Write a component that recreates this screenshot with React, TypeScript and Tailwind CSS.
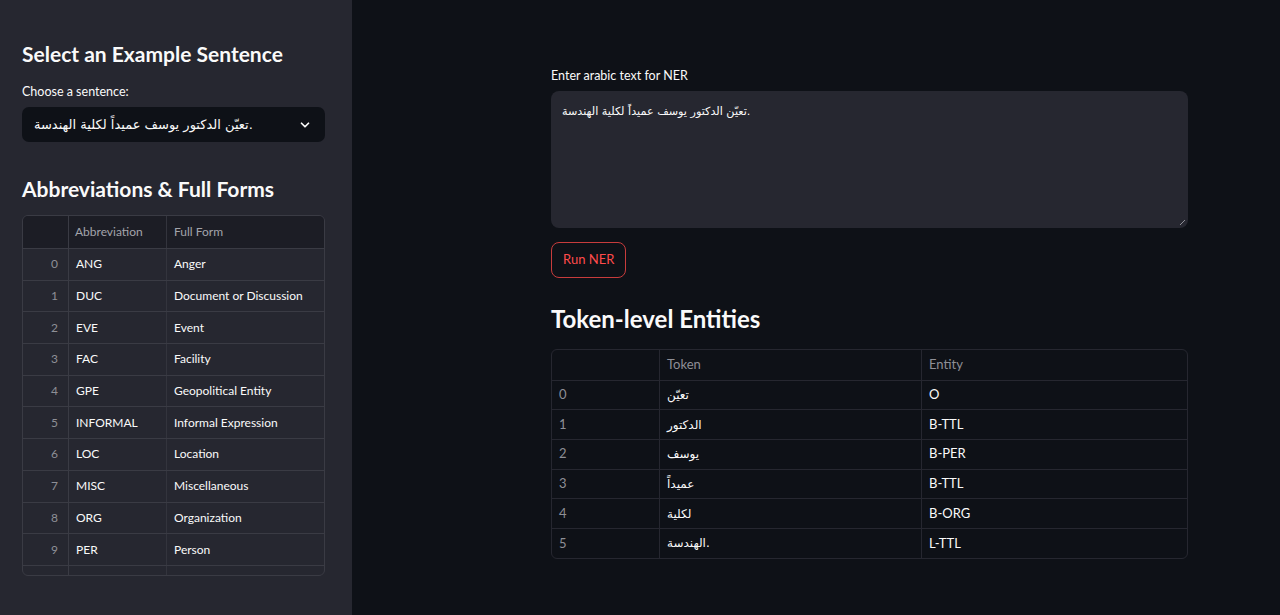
import React from "react";

const sentence = "تعيّن الدكتور يوسف عميداً لكلية الهندسة.";

const abbreviations = [
  ["ANG", "Anger"],
  ["DUC", "Document or Discussion"],
  ["EVE", "Event"],
  ["FAC", "Facility"],
  ["GPE", "Geopolitical Entity"],
  ["INFORMAL", "Informal Expression"],
  ["LOC", "Location"],
  ["MISC", "Miscellaneous"],
  ["ORG", "Organization"],
  ["PER", "Person"],
  ["", ""],
];

const tokens = [
  ["تعيّن", "O"],
  ["الدكتور", "B-TTL"],
  ["يوسف", "B-PER"],
  ["عميداً", "B-TTL"],
  ["لكلية", "B-ORG"],
  ["الهندسة.", "L-TTL"],
];

const font = { fontFamily: "Lato, 'DejaVu Sans', sans-serif" };
const arabic = { fontFamily: "'DejaVu Sans', sans-serif" };

const Sidebar: React.FC = () => {
  return (
    <aside className="flex w-[352px] shrink-0 flex-col bg-[#262730] pl-[22px] pr-[27px] pt-[40px]">
      <h2 className="text-[21px] font-bold leading-[27px] text-[#fafafa]">
        Select an Example Sentence
      </h2>
      <label className="mt-[17px] text-[12.5px] leading-[16px] text-[#fafafa]">
        Choose a sentence:
      </label>
      <div className="mt-[7px] flex h-[35px] items-center justify-between rounded-[7px] bg-[#0e1117] pl-[12px] pr-[13px]">
        <span className="text-[13px] text-[#fafafa]" style={arabic}>
          {sentence}
        </span>
        <svg width="14" height="14" viewBox="0 0 24 24" fill="none" stroke="#fafafa" strokeWidth="3" strokeLinecap="round" strokeLinejoin="round">
          <path d="M6 9l6 6 6-6" />
        </svg>
      </div>
      <h2 className="mt-[33px] text-[21px] font-bold leading-[27px] text-[#fafafa]">
        Abbreviations &amp; Full Forms
      </h2>
      <div className="mt-[13px] h-[361px] overflow-hidden rounded-[6px] border border-[#3a3b44] bg-[#262730]">
        <div className="grid h-[32px] grid-cols-[46px_98px_1fr] bg-[#1c1d25] text-[12px] text-[#a3a4ab]">
          <div className="border-r border-[#3a3b44]" />
          <div className="flex items-center border-r border-[#33343d] px-[6px]">Abbreviation</div>
          <div className="flex items-center px-[7px]">Full Form</div>
        </div>
        {abbreviations.map(([abbr, full], i) => (
          <div key={i} className="grid h-[31.7px] grid-cols-[46px_98px_1fr] border-t border-[#3a3b44] text-[12px] text-[#fafafa]">
            <div className="flex items-center justify-end border-r border-[#3a3b44] pr-[10px] text-[#8e8f96]">
              {abbr ? i : ""}
            </div>
            <div className="flex items-center border-r border-[#33343d] px-[7px]">{abbr}</div>
            <div className="flex items-center px-[7px]">{full}</div>
          </div>
        ))}
      </div>
    </aside>
  );
};

const Main: React.FC = () => {
  return (
    <main className="flex flex-1 bg-[#0e1117] pl-[199px] pt-[68px]">
      <div className="flex w-[637px] flex-col">
        <label className="text-[12.5px] leading-[16px] text-[#fafafa]">Enter arabic text for NER</label>
        <div className="relative mt-[7px] h-[137px] rounded-[8px] bg-[#262730] px-[11px] pt-[6px]">
          <span className="text-[11.2px] text-[#fafafa]" style={arabic}>
            {sentence}
          </span>
          <svg className="absolute bottom-[2px] right-[2px]" width="7" height="7" viewBox="0 0 7 7">
            <path d="M6 1L1 6" stroke="#8e8f96" strokeWidth="1" />
          </svg>
        </div>
        <div className="mt-[14px]">
          <button className="h-[36px] rounded-[8px] border border-[#c83c3c] px-[11px] text-[13px] text-[#ff4b4b]" style={font}>
            Run NER
          </button>
        </div>
        <h2 className="mt-[25px] text-[24px] font-bold leading-[32px] text-[#fafafa]">Token-level Entities</h2>
        <div className="mt-[14px] overflow-hidden rounded-[6px] border border-[#262730]">
          <div className="grid h-[29.5px] grid-cols-[108px_262px_1fr] text-[13px] text-[#8e8f96]">
            <div className="border-r border-[#262730]" />
            <div className="flex items-center border-r border-[#262730] px-[7px]">Token</div>
            <div className="flex items-center px-[7px]">Entity</div>
          </div>
          {tokens.map(([tok, ent], i) => (
            <div key={i} className="grid h-[29.7px] grid-cols-[108px_262px_1fr] border-t border-[#262730] text-[13px] text-[#fafafa]">
              <div className="flex items-center border-r border-[#262730] px-[7px] text-[#8e8f96]">{i}</div>
              <div className="flex items-center border-r border-[#262730] px-[7px]">
                <span className="text-[12px]" style={arabic}>{tok}</span>
              </div>
              <div className="flex items-center px-[7px]">{ent}</div>
            </div>
          ))}
        </div>
      </div>
    </main>
  );
};

export default function App() {
  return (
    <div className="flex h-[615px] w-[1280px] overflow-hidden" style={font}>
      <Sidebar />
      <Main />
    </div>
  );
}
